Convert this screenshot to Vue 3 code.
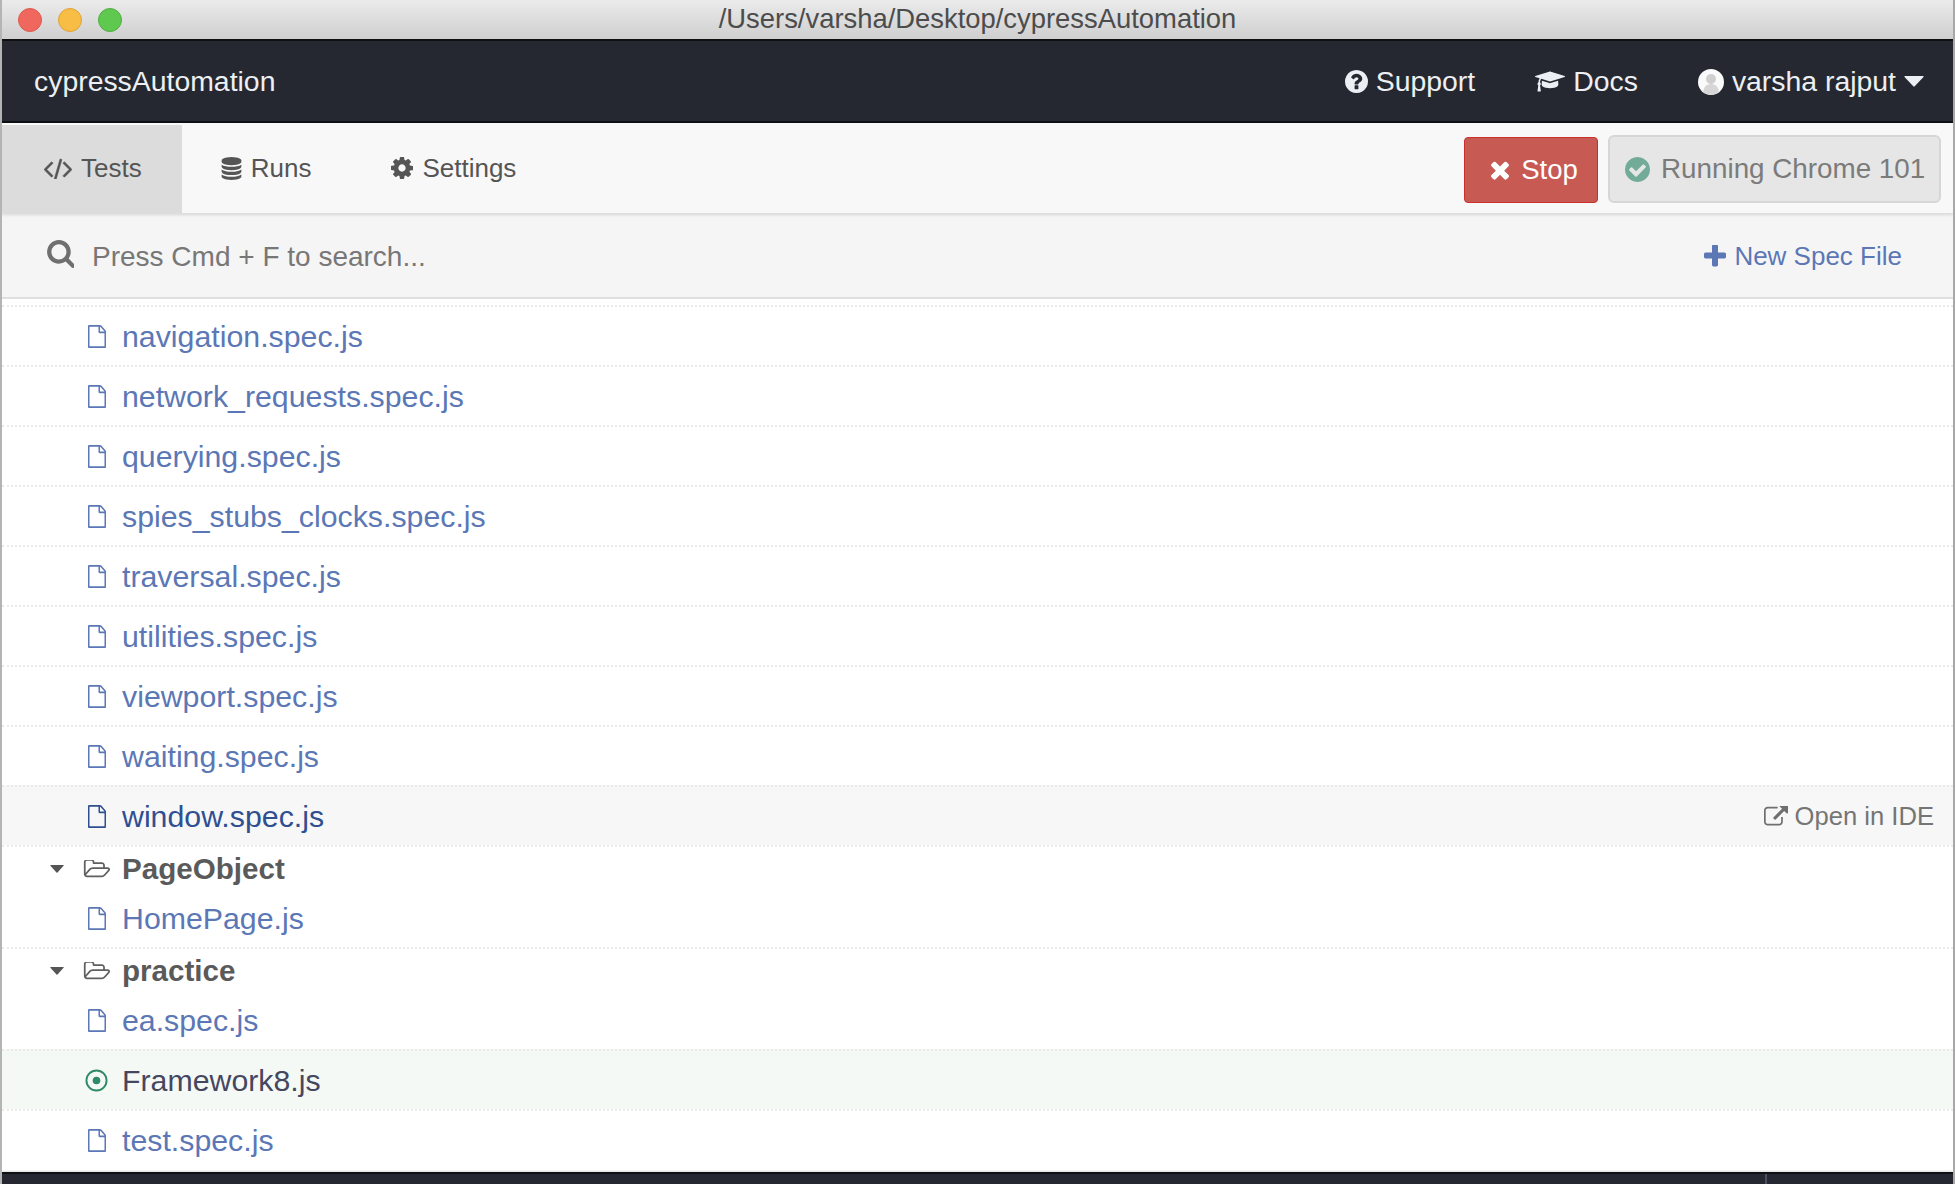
<script setup>
const topFiles = ['navigation.spec.js','network_requests.spec.js','querying.spec.js','spies_stubs_clocks.spec.js','traversal.spec.js','utilities.spec.js','viewport.spec.js','waiting.spec.js']
const FILE = 'M1596 380q28 28 48 76t20 88v1152q0 40-28 68t-68 28h-1344q-40 0-68-28t-28-68v-1600q0-40 28-68t68-28h896q40 0 88 20t76 48zm-444-244v376h376q-10-29-22-41l-313-313q-12-12-41-22zm384 1528v-1024h-416q-40 0-68-28t-28-68v-416h-768v1536h1280z'
const FOLDER = 'M1845 931q0-35-53-35h-1088q-40 0-85.5 21.5t-71.5 52.5l-294 363q-18 24-18 40 0 35 53 35h1088q40 0 86-22t71-53l294-363q18-22 18-39zm-1141-163h768v-160q0-40-28-68t-68-28h-576q-40 0-68-28t-28-68v-64q0-40-28-68t-68-28h-320q-40 0-68 28t-28 68v853l256-315q44-53 116-87.5t140-34.5zm1269 163q0 62-46 120l-295 363q-43 53-116 87.5t-140 34.5h-1088q-92 0-158-66t-66-158v-960q0-92 66-158t158-66h320q92 0 158 66t66 158v32h544q92 0 158 66t66 158v160h192q54 0 99 24.5t67 70.5q15 32 15 68z'
</script>

<template>
  <div class="window">
    <span class="sliver"></span>
    <div class="titlebar">
      <div class="lights"><i class="light red"></i><i class="light yellow"></i><i class="light green"></i></div>
      <div class="title">/Users/varsha/Desktop/cypressAutomation</div>
      <div></div>
    </div>

    <header class="nav">
      <div class="brand">cypressAutomation</div>
      <div class="nav-links">
        <a class="nav-link"><svg class="i-support" viewBox="128 128 1536 1536"><path d="M1024 1376v-192q0-14-9-23t-23-9h-192q-14 0-23 9t-9 23v192q0 14 9 23t23 9h192q14 0 23-9t9-23zm256-672q0-88-55.5-163t-138.5-116-170-41q-243 0-371 213-15 24 8 42l132 100q7 6 19 6 16 0 25-12 53-68 86-92 34-24 86-24 48 0 85.5 26t37.5 59q0 38-20 61t-68 45q-63 28-115.5 86.5t-52.5 125.5v36q0 14 9 23t23 9h192q14 0 23-9t9-23q0-19 21.5-49.5t54.5-49.5q32-18 49-28.5t46-35 44.5-48 28-60.5 12.5-81zm384 192q0 209-103 385.5t-279.5 279.5-385.5 103-385.5-103-279.5-279.5-103-385.5 103-385.5 279.5-279.5 385.5-103 385.5 103 279.5 279.5 103 385.5z"/></svg>Support</a>
        <a class="nav-link"><svg class="i-docs" viewBox="0 130 2304 1530"><path d="M1774 836l18 316q4 69-82 128t-235 93.5-323 34.5-323-34.5-235-93.5-82-128l18-316 574 181q22 7 48 7t48-7zm530-324q0 23-22 31l-1120 352q-4 1-10 1t-10-1l-652-206q-43 34-71 111.5t-34 178.5q63 36 63 109 0 69-58 107l58 433q2 14-8 25-9 11-24 11h-192q-15 0-24-11-10-11-8-25l58-433q-58-38-58-107 0-73 65-111 11-207 98-330l-333-104q-22-8-22-31t22-31l1120-352q4-1 10-1t10 1l1120 352q22 8 22 31z"/></svg>Docs</a>
        <a class="nav-link user">
          <svg class="avatar" viewBox="0 0 26 26"><circle cx="13" cy="13" r="13" fill="#fafafa"/><circle cx="13" cy="10" r="5" fill="#cfcfcf"/><path d="M5 23c1-6 4-8 8-8s7 2 8 8a13 13 0 0 1-16 0z" fill="#d6d6d6"/></svg>
          varsha rajput
          <svg class="caret-user" viewBox="0 0 20 11"><path d="M1 0h18q1 0 .5 1L10.700 10.300q-.7.7-1.400 0L.5 1Q0 0 1 0z"/></svg>
        </a>
      </div>
    </header>

    <nav class="tabs">
      <a class="tab active"><svg class="i-code" viewBox="40 230 1840 1330"><path d="M617 1399l-50 50q-10 10-23 10t-23-10l-466-466q-10-10-10-23t10-23l466-466q10-10 23-10t23 10l50 50q10 10 10 23t-10 23l-393 393 393 393q10 10 10 23t-10 23zm591-1067l-373 1291q-4 13-15.500 19.500t-23.500 2.500l-62-17q-13-4-19.500-15.500t-2.500-24.500l373-1291q4-13 15.500-19.500t23.500-2.500l62 17q13 4 19.500 15.500t2.500 24.500zm657 651l-466 466q-10 10-23 10t-23-10l-50-50q-10-10-10-23t10-23l393-393-393-393q-10-10-10-23t10-23l50-50q10-10 23-10t23 10l466 466q10 10 10 23t-10 23z"/></svg>Tests</a>
      <a class="tab"><svg class="i-db" viewBox="128 0 1536 1792"><path d="M896 768q237 0 443-43t325-127v170q0 69-103 128t-280 93.500-385 34.500-385-34.500-280-93.500-103-128v-170q119 84 325 127t443 43zm0 768q237 0 443-43t325-127v170q0 69-103 128t-280 93.500-385 34.500-385-34.500-280-93.500-103-128v-170q119 84 325 127t443 43zm0-384q237 0 443-43t325-127v170q0 69-103 128t-280 93.500-385 34.500-385-34.500-280-93.500-103-128v-170q119 84 325 127t443 43zm0-1152q208 0 385 34.500t280 93.500 103 128v128q0 69-103 128t-280 93.500-385 34.500-385-34.500-280-93.500-103-128v-128q0-69 103-128t280-93.500 385-34.500z"/></svg>Runs</a>
      <a class="tab"><svg class="i-cog" viewBox="128 128 1536 1536"><path d="M1152 896q0-106-75-181t-181-75-181 75-75 181 75 181 181 75 181-75 75-181zm512-109v222q0 12-8 23t-20 13l-185 28q-19 54-39 91 35 50 107 138 10 12 10 25t-9 23q-27 37-99 108t-94 71q-12 0-26-9l-138-108q-44 23-91 38-16 136-29 186-7 28-36 28h-222q-14 0-24.500-8.500t-11.500-21.500l-28-184q-49-16-90-37l-141 107q-10 9-25 9-14 0-25-11-126-114-165-168-7-10-7-23 0-12 8-23 15-21 51-66.500t54-70.500q-27-50-41-99l-183-27q-13-2-21-12.500t-8-23.500v-222q0-12 8-23t19-13l186-28q14-46 39-92-40-57-107-138-10-12-10-24 0-10 9-23 26-36 98.500-107.500t94.500-71.500q13 0 26 10l138 107q44-23 91-38 16-136 29-186 7-28 36-28h222q14 0 24.500 8.500t11.500 21.500l28 184q49 16 90 37l142-107q9-9 24-9 13 0 25 10 129 119 165 170 7 8 7 22 0 12-8 23-15 21-51 66.500t-54 70.500q26 50 41 98l183 28q13 2 21 12.500t8 23.500z"/></svg>Settings</a>
      <div class="tab-actions">
        <button class="stop"><svg class="i-x" viewBox="300 350 1190 1200"><path d="M1490 1322q0 40-28 68l-136 136q-28 28-68 28t-68-28l-294-294-294 294q-28 28-68 28t-68-28l-136-136q-28-28-28-68t28-68l294-294-294-294q-28-28-28-68t28-68l136-136q28-28 68-28t68 28l294 294 294-294q28-28 68-28t68 28l136 136q28 28 28 68t-28 68l-294 294 294 294q28 28 28 68z"/></svg>Stop</button>
        <div class="running"><svg class="i-check" viewBox="128 128 1536 1536"><path d="M1412 734q0-28-18-46l-91-90q-19-19-45-19t-45 19l-408 407-226-226q-19-19-45-19t-45 19l-91 90q-18 18-18 46 0 27 18 45l362 362q19 19 45 19 27 0 46-19l543-543q18-18 18-45zm252 162q0 209-103 385.500t-279.500 279.500-385.500 103-385.500-103-279.500-279.500-103-385.500 103-385.500 279.500-279.500 385.500-103 385.500 103 279.500 279.500 103 385.500z"/></svg>Running Chrome 101</div>
      </div>
    </nav>

    <div class="search">
      <svg class="i-search" viewBox="0 128 1664 1664"><path d="M1216 832q0-185-131.500-316.500t-316.500-131.500-316.500 131.500-131.500 316.500 131.500 316.500 316.500 131.500 316.500-131.500 131.500-316.500zm512 832q0 52-38 90t-90 38q-54 0-90-38l-343-342q-179 124-399 124-143 0-273.500-55.500t-225-150-150-225-55.500-273.500 55.500-273.500 150-225 225-150 273.500-55.500 273.500 55.500 225 150 150 225 55.500 273.500q0 220-124 399l343 343q37 37 37 90z"/></svg>
      <span class="placeholder">Press Cmd + F to search...</span>
      <a class="new-spec"><svg class="i-plus" viewBox="128 160 1472 1472"><path d="M1600 736v192q0 40-28 68t-68 28h-416v416q0 40-28 68t-68 28h-192q-40 0-68-28t-28-68v-416h-416q-40 0-68-28t-28-68v-192q0-40 28-68t68-28h416v-416q0-40 28-68t68-28h192q40 0 68 28t28 68v416h416q40 0 68 28t28 68z"/></svg>New Spec File</a>
    </div>

    <main class="list">
      <div v-for="f in topFiles" :key="f" class="row">
        <svg class="i-file" viewBox="128 0 1536 1792" preserveAspectRatio="none"><path :d="FILE"/></svg>{{ f }}
      </div>
      <div class="row hover">
        <svg class="i-file" viewBox="128 0 1536 1792" preserveAspectRatio="none"><path :d="FILE"/></svg>window.spec.js
        <span class="open-ide"><svg class="i-ext" viewBox="0 128 1792 1536"><path d="M1408 928v320q0 119-84.500 203.500t-203.500 84.500h-832q-119 0-203.500-84.500t-84.500-203.500v-832q0-119 84.500-203.500t203.500-84.500h704q14 0 23 9t9 23v64q0 14-9 23t-23 9h-704q-66 0-113 47t-47 113v832q0 66 47 113t113 47h832q66 0 113-47t47-113v-320q0-14 9-23t23-9h64q14 0 23 9t9 23zm384-864v512q0 26-19 45t-45 19-45-19l-176-176-652 652q-10 10-23 10t-23-10l-114-114q-10-10-10-23t10-23l652-652-176-176q-19-19-19-45t19-45 45-19h512q26 0 45 19t19 45z"/></svg>Open in IDE</span>
      </div>
      <div class="folder">
        <svg class="i-caret" viewBox="0 0 14 8"><path d="M.8 0h12.400q.8 0 .4.7L7.500 7.600q-.5.500-1 0L.4.700Q0 0 .8 0z"/></svg>
        <svg class="i-folder" viewBox="0 200 1973 1400" preserveAspectRatio="none"><path :d="FOLDER"/></svg>PageObject
      </div>
      <div class="row child">
        <svg class="i-file" viewBox="128 0 1536 1792" preserveAspectRatio="none"><path :d="FILE"/></svg>HomePage.js
      </div>
      <div class="folder">
        <svg class="i-caret" viewBox="0 0 14 8"><path d="M.8 0h12.400q.8 0 .4.7L7.500 7.600q-.5.500-1 0L.4.700Q0 0 .8 0z"/></svg>
        <svg class="i-folder" viewBox="0 200 1973 1400" preserveAspectRatio="none"><path :d="FOLDER"/></svg>practice
      </div>
      <div class="row child">
        <svg class="i-file" viewBox="128 0 1536 1792" preserveAspectRatio="none"><path :d="FILE"/></svg>ea.spec.js
      </div>
      <div class="row active">
        <svg class="i-dot" viewBox="0 0 24 24"><circle cx="12" cy="12" r="10.500" fill="none" stroke="#2e8b63" stroke-width="2"/><circle cx="12" cy="12" r="4" fill="#2e8b63"/></svg>Framework8.js
      </div>
      <div class="row">
        <svg class="i-file" viewBox="128 0 1536 1792" preserveAspectRatio="none"><path :d="FILE"/></svg>test.spec.js
      </div>
    </main>

    <footer class="foot"><i class="foot-mark"></i></footer>
  </div>
</template>

<style scoped>
.window {
  position: relative;
  width: 1955px;
  height: 1184px;
  box-sizing: border-box;
  border-left: 2px solid #b4b4b4;
  border-right: 2px solid #a8a8a8;
  display: flex;
  flex-direction: column;
  overflow: hidden;
  background: #fff;
  font-family: "Liberation Sans", Arial, sans-serif;
  font-size: 30.3px;
  color: #555;
}
.sliver {
  position: absolute;
  left: -2px;
  top: 222px;
  width: 2px;
  height: 20px;
  background: #222;
}
.titlebar {
  height: 39px;
  flex: none;
  display: grid;
  grid-template-columns: 1fr auto 1fr;
  align-items: center;
  background: linear-gradient(#ebebeb, #cfcfcf);
}
.lights { display: flex; gap: 16px; padding-left: 16px; }
.light { width: 24px; height: 24px; border-radius: 50%; box-sizing: border-box; }
.red { background: #f0675d; border: 1px solid #dc5a50; }
.yellow { background: #f8bd45; border: 1px solid #dea33a; }
.green { background: #5fc84f; border: 1px solid #50ae42; }
.title { font-size: 27.4px; color: #4c4c4c; padding-bottom: 2px; }

.nav {
  height: 84px;
  flex: none;
  box-sizing: border-box;
  border-top: 2px solid #0f1013;
  border-bottom: 2px solid #0f1013;
  background: #252830;
  display: flex;
  align-items: center;
  justify-content: space-between;
  padding: 1px 29px 0 32px;
  color: #eceff3;
  font-size: 28.4px;
}
.nav-links { display: flex; align-items: center; gap: 60px; }
.nav-link { display: flex; align-items: center; gap: 8px; }
.nav-link svg { fill: #eceff3; flex: none; }
.i-support { width: 23px; height: 23px; }
.i-docs { width: 30px; height: 21px; }
.avatar { width: 26px; height: 26px; }
.caret-user { width: 20px; height: 11px; }

.tabs {
  height: 90px;
  flex: none;
  display: flex;
  background: #f8f8f8;
  font-size: 26px;
  color: #555;
  box-shadow: 0 2px 3px rgba(0,0,0,.12);
  position: relative;
  z-index: 1;
}
.tab {
  display: flex;
  align-items: center;
  gap: 9px;
  padding: 0 41px 0 39px;
}
.tab svg { fill: #555; flex: none; }
.tab.active { background: #dcdcdc; padding: 0 40px 2px 42px; margin-top: 2px; }
.i-code { width: 28px; height: 21px; stroke: #555; stroke-width: 40; }
.i-db { width: 21px; height: 23px; }
.i-cog { width: 22px; height: 22px; }
.tab-actions { margin-left: auto; display: flex; align-items: center; gap: 10px; padding-right: 12px; }
.stop {
  width: 134px;
  height: 66px;
  margin-top: 4px;
  box-sizing: border-box;
  border: 1px solid #c9302c;
  border-radius: 4px;
  background: #c85a54;
  color: #fff;
  font: inherit;
  font-size: 27.5px;
  display: flex;
  align-items: center;
  justify-content: center;
  gap: 12px;
  padding: 0 0 0 7px;
}
.i-x { width: 18px; height: 19px; fill: #fff; }
.running {
  width: 333px;
  height: 68px;
  margin-top: 2px;
  box-sizing: border-box;
  border: 2px solid #d6d6d6;
  border-radius: 6px;
  background: #e6e6e6;
  color: #7b7b7b;
  font-size: 27.8px;
  display: flex;
  align-items: center;
  gap: 11px;
  padding: 0 0 0 15px;
  white-space: nowrap;
}
.i-check { width: 25px; height: 25px; fill: #72ab97; flex: none; }

.search {
  height: 86px;
  flex: none;
  box-sizing: border-box;
  border-bottom: 2px solid #dfdfdf;
  background: #f5f5f5;
  display: flex;
  align-items: center;
  padding: 3px 51px 0 44px;
  color: #777;
  font-size: 28px;
}
.i-search { width: 28px; height: 28px; fill: #6f6f6f; margin: -6px 18px 0 0; flex: none; }
.placeholder { flex: 1; }
.new-spec { display: flex; align-items: center; gap: 8px; color: #5b77b5; font-size: 26px; }
.i-plus { width: 23px; height: 23px; fill: #5b77b5; }

.list {
  flex: 1;
  min-height: 0;
  padding-top: 6px;
  box-sizing: border-box;
}
.row {
  height: 60px;
  box-sizing: border-box;
  border-top: 2px dotted #eaeaea;
  display: flex;
  align-items: center;
  padding: 1px 0 0 86px;
  color: #5b77b5;
}
.row.child { border-top: none; padding-top: 3px; }
.row.hover { background: #f7f7f7; color: #2f4f91; }
.row.hover .i-file { fill: #2f4f91; }
.row.active { background: #f5f9f6; color: #45475f; }
.i-file { width: 18px; height: 23px; fill: #5b77b5; margin: -1px 16px 0 0; flex: none; }
.i-dot { width: 23px; height: 23px; margin: 0 14px 0 -3px; flex: none; }
.open-ide {
  margin-left: auto;
  padding-right: 19px;
  display: flex;
  align-items: center;
  gap: 7px;
  color: #757575;
  font-size: 25.6px;
}
.i-ext { width: 24px; height: 22px; fill: #6f6f6f; }
.folder {
  height: 42px;
  box-sizing: border-box;
  border-top: 2px dotted #eaeaea;
  display: flex;
  align-items: center;
  padding: 3px 0 0 48px;
  font-weight: 700;
  font-size: 29.6px;
  color: #5a5a5a;
}
.i-caret { width: 14px; height: 8px; fill: #555; margin-right: 19px; flex: none; }
.i-folder { width: 27px; height: 18px; fill: #5f5f5f; margin-right: 12px; flex: none; }

.foot {
  height: 12px;
  flex: none;
  box-sizing: border-box;
  border-top: 2px solid #0f1013;
  background: #252830;
  position: relative;
  box-shadow: 0 -1px 2px rgba(0,0,0,.15);
}
.foot-mark {
  position: absolute;
  left: 1763px;
  top: 0;
  bottom: 0;
  width: 2px;
  background: #4b4e68;
}
</style>
